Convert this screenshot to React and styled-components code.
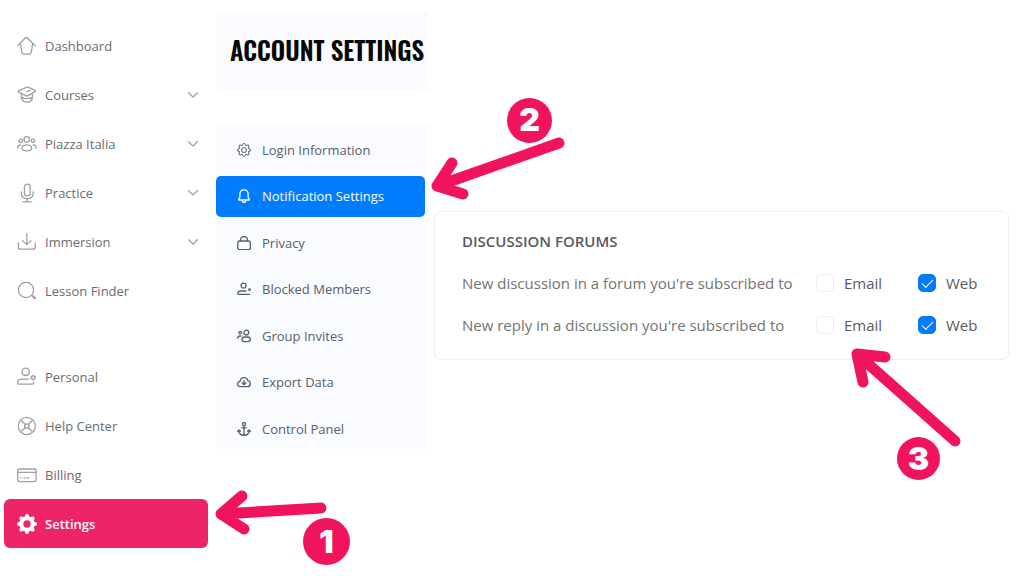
import React, { useState } from "react";
import styled, { createGlobalStyle } from "styled-components";
import { BsGear, BsGearFill } from "react-icons/bs";

const GlobalStyle = createGlobalStyle`
  * {
    box-sizing: border-box;
  }
  body {
    margin: 0;
    background: #ffffff;
    font-family: "Open Sans", "Noto Sans", sans-serif;
  }
`;

const Page = styled.div`
  display: grid;
  grid-template-columns: 204px 212px minmax(0, 1fr);
  align-items: start;
  padding: 0 15px 0 4px;
`;

const Sidebar = styled.nav`
  display: flex;
  flex-direction: column;
  gap: 37px;
  padding: 21px 0;
`;

const List = styled.ul`
  list-style: none;
  margin: 0;
  padding: 0;
`;

const Item = styled.li`
  position: relative;
`;

const SideLink = styled.a`
  display: flex;
  align-items: center;
  gap: 8px;
  height: 49px;
  padding: 0 10px 0 13px;
  border-radius: 6px;
  font-size: 13px;
  line-height: 20px;
  font-weight: ${(props) => (props.$active ? 600 : 400)};
  color: ${(props) => (props.$active ? "#ffffff" : "#6c6c6c")};
  background: ${(props) => (props.$active ? "#ee2468" : "transparent")};
  text-decoration: none;
`;

const SideLabel = styled.span`
  flex: 1;
`;

const Icon = styled.svg`
  flex: none;
  width: ${(props) => props.$size}px;
  height: ${(props) => props.$size}px;
  fill: none;
  stroke: currentColor;
  stroke-width: 1.3;
  stroke-linecap: round;
  stroke-linejoin: round;
`;

const SideIcon = styled.span`
  display: flex;
  width: 20px;
  color: ${(props) => (props.$active ? "#ffffff" : "#a0a0a0")};
`;

const Chevron = styled.svg`
  width: 10px;
  height: 6px;
  fill: none;
  stroke: #a0a0a0;
  stroke-width: 1.3;
  stroke-linecap: round;
  stroke-linejoin: round;
`;

const Account = styled.div`
  display: flex;
  flex-direction: column;
  gap: 34px;
  margin-left: 8px;
  margin-right: -8px;
  padding-top: 12px;
`;

const Heading = styled.h1`
  display: flex;
  align-items: center;
  height: 79px;
  margin: 0;
  padding: 0 0 4px 14px;
  background: #fafbfe;
  color: #060606;
  font-family: "Oswald", "Roboto Condensed", "Liberation Sans Narrow",
    sans-serif;
  font-weight: 600;
  font-size: 25px;
  line-height: 32px;
  white-space: nowrap;
`;

const Menu = styled(List)`
  display: flex;
  flex-direction: column;
  justify-content: space-between;
  min-height: 324px;
  padding: 4px 3px 0 0;
  background: #fafbfe;
`;

const MenuLink = styled.a`
  display: flex;
  align-items: center;
  gap: 11px;
  height: 41px;
  padding: 0 21px;
  border-radius: 5px;
  font-size: 13px;
  line-height: 20px;
  color: ${(props) => (props.$active ? "#ffffff" : "#556072")};
  background: ${(props) => (props.$active ? "#007cff" : "transparent")};
  text-decoration: none;
  white-space: nowrap;
`;

const Card = styled.section`
  margin: 211px 0 0 14px;
  padding: 17px 27px 13px;
  border: 1px solid #eeeeee;
  border-radius: 7px;
`;

const CardTitle = styled.h2`
  margin: 0 0 9px;
  font-size: 15px;
  line-height: 24px;
  font-weight: 600;
  color: #5a5a5a;
`;

const Row = styled.div`
  display: grid;
  grid-template-columns: minmax(0, 1fr) 102px 63px;
  min-height: 42px;
`;

const RowText = styled.span`
  align-self: center;
  font-size: 15px;
  line-height: 20px;
  color: #737373;
`;

const Choice = styled.div`
  position: relative;
  display: flex;
  align-items: center;
`;

const ChoiceLabel = styled.label`
  display: flex;
  align-items: center;
  gap: 10px;
  font-size: 15px;
  line-height: 20px;
  color: #5a5a5a;
`;

const Check = styled.input`
  appearance: none;
  display: grid;
  place-items: center;
  width: 18px;
  height: 18px;
  margin: 0;
  border: 1px solid #eeeeee;
  border-radius: 5px;
  background: #ffffff;

  &:checked {
    border-color: #007cff;
    background: #007cff;
  }
  &:checked::after {
    content: "";
    width: 10px;
    height: 5px;
    margin-bottom: 3px;
    border: solid #ffffff;
    border-width: 0 0 1px 1px;
    transform: rotate(-45deg);
  }
`;

const CalloutBox = styled.div`
  position: absolute;
  left: ${(props) => props.$left};
  top: ${(props) => props.$top};
  width: 150px;
  z-index: 2;
  pointer-events: none;
`;

const Arrow = styled.svg`
  display: block;
  overflow: visible;
  fill: none;
  stroke: #f0145f;
  stroke-width: 11;
  stroke-linecap: round;
  stroke-linejoin: round;
`;

const Badge = styled.span`
  position: absolute;
  left: ${(props) => props.$x}px;
  top: ${(props) => props.$y}px;
  display: flex;
  align-items: center;
  justify-content: center;
  width: ${(props) => props.$size}px;
  height: ${(props) => props.$size}px;
  border-radius: 50%;
  background: #f0145f;
  color: #ffffff;
  font-family: "Inter", "Lato", sans-serif;
  font-weight: 900;
  font-size: 32px;
  line-height: 32px;
`;

const Callout = ({ number, left, top, arrow, badge }) => (
  <CalloutBox $left={left} $top={top}>
    <Arrow width="150" height="80" aria-hidden="true">
      <path d={arrow} />
    </Arrow>
    <Badge $x={badge.x} $y={badge.y} $size={badge.size}>
      {number}
    </Badge>
  </CalloutBox>
);

const sideIcons = {
  home: (
    <path d="M.8 9.8 7.8 2.2q1.5-1.4 3 0l7.4 7.6M3.6 8.6l1.3 8q.3 1.6 1.9 1.6h5.5q1.6 0 1.9-1.6l1.3-8" />
  ),
  cap: (
    <>
      <path d="M1.3 6.9q-.5-.6.4-1L9.4 2.3q1.1-.5 2.2 0l6.5 3q.9.5 0 1.1l-6.9 4.2q-1.2.7-2.5.1L2 7.4q-.5-.2-.7-.5ZM9.9 6.6l3-1.3" />
      <path d="M4.4 9.2v3.6q.6 4.2 5.5 4.2t5.5-4.2V9.2M4.6 12.2q2 1.4 5.3 1.4t5.3-1.4" />
    </>
  ),
  people: (
    <>
      <circle cx="9.8" cy="5.5" r="2.8" />
      <circle cx="3.7" cy="6.8" r="1.7" />
      <circle cx="16" cy="6.8" r="1.7" />
      <path d="M5 14.2q0-3.3 4.8-3.3t4.8 3.3q0 2.6-4.8 2.6T5 14.2ZM.8 14.2q-.2-3 2.8-3.2M19 14.2q.2-3-2.8-3.2" />
    </>
  ),
  mic: (
    <>
      <rect x="7.4" y="1.2" width="5.8" height="11.6" rx="2.9" />
      <path d="M4.4 8.8v1.4q0 5.4 5.9 5.4t5.9-5.4V8.8M10.3 15.6v3M6 18.8h8.6" />
    </>
  ),
  download: (
    <path d="M9.8 1.6v10.8M5.6 8.6l4.2 4 4.2-4M1.4 11v4.2q0 2 2 2h12.8q2 0 2-2V11" />
  ),
  search: (
    <>
      <circle cx="9" cy="9" r="7.6" />
      <path d="m15.6 15 2.2 2.2" strokeWidth="2.4" />
    </>
  ),
  personal: (
    <>
      <circle cx="8.7" cy="4.8" r="3.7" />
      <path d="M16.8 15.2q0 2-1.4 2H1.9q-1.2 0-1.2-1.4 0-3.6 4.4-3.6h6.6" />
      <circle cx="16.2" cy="10.6" r="1.7" />
      <path d="M16.2 8.2v.6M16.2 12.4v.6M14.1 9.4l.5.3M17.8 11.5l.5.3M14.1 11.8l.5-.3M17.8 9.7l.5-.3" />
    </>
  ),
  help: (
    <>
      <circle cx="9.8" cy="10" r="8.6" />
      <circle cx="9.8" cy="10" r="2.2" />
      <path d="m4.8 5 3.3 3.3M14.8 5l-3.3 3.3M4.8 15l3.3-3.3M14.8 15l-3.3-3.3" />
    </>
  ),
  card: (
    <>
      <rect x=".7" y="4" width="18.4" height="12.6" rx="1.8" />
      <path d="M.7 7.4h18.4M3.6 12.8h.8M7 12.8h1M9.8 12.8h2.2" />
    </>
  ),
};

const menuIcons = {
  bell: (
    <path d="M1.6 10.6q1.3-1.2 1.3-3V5.2Q2.9.8 7 .8t4.1 4.4v2.4q0 1.8 1.3 3 .2.4-.4.4H2q-.6 0-.4-.4ZM5.2 11.2q0 2.2 1.8 2.2t1.8-2.2" />
  ),
  lock: (
    <>
      <rect x=".8" y="5" width="12.6" height="8.6" rx="1.8" />
      <path d="M3.6 5V3.8Q3.6.6 7 .6t3.4 3.2V5" />
    </>
  ),
  blocked: (
    <>
      <circle cx="6.6" cy="3.6" r="2.5" />
      <path d="M12.4 12.4H1.8q-1 0-1-1 0-2.4 3-2.4h5M11.8 7l1.4 1.2M13.2 7l-1.4 1.2" />
    </>
  ),
  group: (
    <>
      <circle cx="9.3" cy="3.6" r="2.4" />
      <circle cx="3.2" cy="3.6" r="1.3" />
      <path d="M5 10.6q0-2.6 2.6-2.6h3.2q2.6 0 2.6 2.6 0 2-2.4 2H7.2Q5 12.6 5 10.6ZM.6 9.2q0-2.2 2.4-2.2h1" />
    </>
  ),
  cloud: (
    <path d="M3.6 11.6q-3 0-3-2.6 0-2.2 2.4-2.6Q3.6 2.6 7 2.6q3.2 0 3.9 3 2.5.4 2.5 3 0 3-3 3ZM7 5.6v4M5.2 8 7 9.7 8.8 8" />
  ),
  anchor: (
    <>
      <circle cx="7" cy="2.1" r="1.6" />
      <path d="M7 3.8v9.4M4.8 5.8h4.4M.6 9.6 1.9 8l1.6 1.2M13.4 9.6 12.1 8l-1.6 1.2M1.8 8.6q.4 4.6 5.2 4.7 4.8-.1 5.2-4.7" />
    </>
  ),
};

const mainLinks = [
  { label: "Dashboard", icon: "home" },
  { label: "Courses", icon: "cap", open: true },
  { label: "Piazza Italia", icon: "people", open: true },
  { label: "Practice", icon: "mic", open: true },
  { label: "Immersion", icon: "download", open: true },
  { label: "Lesson Finder", icon: "search" },
];

const userLinks = [
  { label: "Personal", icon: "personal" },
  { label: "Help Center", icon: "help" },
  { label: "Billing", icon: "card" },
  { label: "Settings", icon: "gear", active: true },
];

const menuLinks = [
  { label: "Login Information", icon: "gear" },
  { label: "Notification Settings", icon: "bell", active: true },
  { label: "Privacy", icon: "lock" },
  { label: "Blocked Members", icon: "blocked" },
  { label: "Group Invites", icon: "group" },
  { label: "Export Data", icon: "cloud" },
  { label: "Control Panel", icon: "anchor" },
];

const SideItem = ({ link, children }) => (
  <Item>
    <SideLink href="#" $active={link.active}>
      <SideIcon $active={link.active}>
        {link.icon === "gear" ? (
          <BsGearFill size={20} />
        ) : (
          <Icon $size={20} viewBox="0 0 20 20">
            {sideIcons[link.icon]}
          </Icon>
        )}
      </SideIcon>
      <SideLabel>{link.label}</SideLabel>
      {link.open && (
        <Chevron viewBox="0 0 10 6">
          <path d="m.6.8 4.4 4.2L9.4.8" />
        </Chevron>
      )}
    </SideLink>
    {children}
  </Item>
);

const NotificationRow = ({ text, children }) => {
  const [email, setEmail] = useState(false);
  const [web, setWeb] = useState(true);
  return (
    <Row role="group" aria-label={text}>
      <RowText>{text}</RowText>
      <Choice>
        <ChoiceLabel>
          <Check
            type="checkbox"
            checked={email}
            onChange={(e) => setEmail(e.target.checked)}
          />
          Email
        </ChoiceLabel>
        {children}
      </Choice>
      <Choice>
        <ChoiceLabel>
          <Check
            type="checkbox"
            checked={web}
            onChange={(e) => setWeb(e.target.checked)}
          />
          Web
        </ChoiceLabel>
      </Choice>
    </Row>
  );
};

export default () => (
  <>
    <GlobalStyle />
    <Page>
      <Sidebar>
        <List>
          {mainLinks.map((link) => (
            <SideItem key={link.label} link={link} />
          ))}
        </List>
        <List>
          {userLinks.map((link) => (
            <SideItem key={link.label} link={link}>
              {link.active && (
                <Callout
                  number="1"
                  left="100%"
                  top="-14px"
                  arrow="M113 23 13 29M34 11 13 29l23 15"
                  badge={{ x: 95, y: 33, size: 47 }}
                />
              )}
            </SideItem>
          ))}
        </List>
      </Sidebar>
      <Account>
        <Heading>ACCOUNT SETTINGS</Heading>
        <Menu>
          {menuLinks.map((link) => (
            <Item key={link.label}>
              <MenuLink href="#" $active={link.active}>
                {link.icon === "gear" ? (
                  <BsGear size={14} />
                ) : (
                  <Icon $size={14} viewBox="0 0 14 14">
                    {menuIcons[link.icon]}
                  </Icon>
                )}
                {link.label}
              </MenuLink>
              {link.active && (
                <Callout
                  number="2"
                  left="100%"
                  top="-86px"
                  arrow="M134 53 12 96M27 73 12 96l26 8"
                  badge={{ x: 82, y: 8, size: 45 }}
                />
              )}
            </Item>
          ))}
        </Menu>
      </Account>
      <Card>
        <CardTitle>DISCUSSION FORUMS</CardTitle>
        <NotificationRow text="New discussion in a forum you're subscribed to" />
        <NotificationRow text="New reply in a discussion you're subscribed to">
          <Callout
            number="3"
            left="29px"
            top="100%"
            arrow="M110 95 12 8M40 11 12 8l6 28"
            badge={{ x: 52, y: 91, size: 43 }}
          />
        </NotificationRow>
      </Card>
    </Page>
  </>
);
